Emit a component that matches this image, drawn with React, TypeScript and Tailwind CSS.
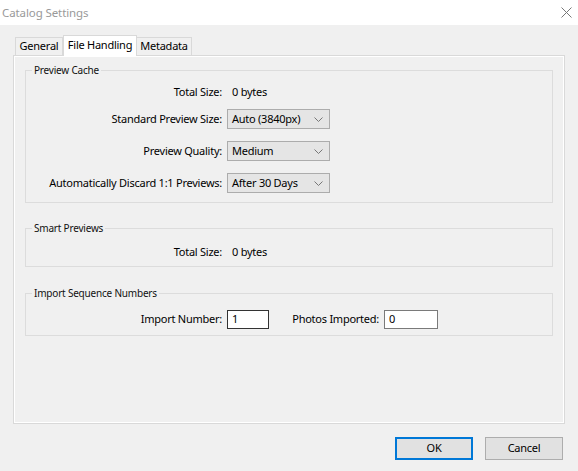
// Lightroom-style "Catalog Settings" dialog, File Handling tab

function Chevron() {
  return (
    <svg width="9" height="5" viewBox="0 0 9 5" className="text-[#777]">
      <path d="M0.5 0.5 L4.5 4.5 L8.5 0.5" fill="none" stroke="currentColor" strokeWidth="1" />
    </svg>
  );
}

function Select({ value }: { value: string }) {
  return (
    <div className="w-[103px] h-[20px] border border-[#acacac] bg-[#e5e5e5] flex items-center justify-between pl-[4px] pr-[6px]">
      <span>{value}</span>
      <Chevron />
    </div>
  );
}

function Row({ label, children }: { label: string; children: React.ReactNode }) {
  return (
    <div className="h-[20px] flex items-center">
      <div className="w-[196px] text-right">{label}</div>
      <div className="ml-[5px] flex items-center">{children}</div>
    </div>
  );
}

function Group({ title, className, children }: { title: string; className: string; children: React.ReactNode }) {
  return (
    <fieldset className={"border border-[#dcdcdc] " + className}>
      <legend className="ml-[6px] px-[2px] text-[10px] tracking-[-0.2px] leading-[14px] text-[#111]">{title}</legend>
      {children}
    </fieldset>
  );
}

export default function App() {
  return (
    <div className="w-[578px] h-[471px] bg-[#f0f0f0] flex flex-col text-[11px] tracking-[-0.25px] text-black font-['Noto_Sans',sans-serif]">
      {/* title bar */}
      <div className="h-[25px] bg-white flex items-center justify-between pl-[2px] pr-[6px]">
        <span className="text-[11.5px] tracking-[-0.1px] text-[#999]">Catalog Settings</span>
        <svg width="11" height="11" viewBox="0 0 11 11" className="text-[#777]">
          <path d="M0.5 0.5 L10.5 10.5 M10.5 0.5 L0.5 10.5" stroke="currentColor" strokeWidth="1" />
        </svg>
      </div>

      <div className="flex-1 px-[13px] pt-[10px] flex flex-col">
        {/* tabs */}
        <div className="h-[20px] flex items-end pl-[2px] relative z-10">
          <div className="w-[48px] h-[18px] border border-b-0 border-[#d9d9d9] bg-[#f0f0f0] flex items-center justify-center">
            General
          </div>
          <div className="w-[74px] h-[21px] -mb-px border border-b-0 border-[#d9d9d9] bg-white flex items-center justify-center pb-[2px]">
            File Handling
          </div>
          <div className="w-[55px] h-[18px] border border-b-0 border-l-0 border-[#d9d9d9] bg-[#f0f0f0] flex items-center justify-center">
            Metadata
          </div>
        </div>

        {/* tab panel */}
        <div className="h-[369px] border border-[#d9d9d9] shadow-[inset_1px_1px_0_#fff,inset_-1px_-1px_0_#fff] px-[11px] pt-[7px] flex flex-col">
          <Group title="Preview Cache" className="pt-[5px] pb-[9px]">
            <Row label="Total Size:">
              <span className="pl-[5px]">0 bytes</span>
            </Row>
            <div className="mt-[7px]">
              <Row label="Standard Preview Size:">
                <Select value="Auto (3840px)" />
              </Row>
            </div>
            <div className="mt-[12px]">
              <Row label="Preview Quality:">
                <Select value="Medium" />
              </Row>
            </div>
            <div className="mt-[12px]">
              <Row label="Automatically Discard 1:1 Previews:">
                <Select value="After 30 Days" />
              </Row>
            </div>
          </Group>

          <Group title="Smart Previews" className="mt-[18px] pt-[7px] pb-[4px]">
            <Row label="Total Size:">
              <span className="pl-[5px]">0 bytes</span>
            </Row>
          </Group>

          <Group title="Import Sequence Numbers" className="mt-[19px] pt-[9px] pb-[6px]">
            <Row label="Import Number:">
              <div className="w-[42px] h-[19px] border border-[#333] bg-white pl-[4px] flex items-center">1</div>
              <div className="w-[110px] text-right">Photos Imported:</div>
              <div className="ml-[5px] w-[54px] h-[19px] border border-[#7a7a7a] bg-white pl-[4px] flex items-center">0</div>
            </Row>
          </Group>
        </div>

        {/* buttons */}
        <div className="mt-[13px] flex justify-end gap-[12px] pr-[2px]">
          <button className="w-[78px] h-[23px] border-2 border-[#0078d7] bg-[#e1e1e1] flex items-center justify-center">
            OK
          </button>
          <button className="w-[78px] h-[23px] border border-[#adadad] bg-[#e1e1e1] flex items-center justify-center">
            Cancel
          </button>
        </div>
      </div>
    </div>
  );
}
